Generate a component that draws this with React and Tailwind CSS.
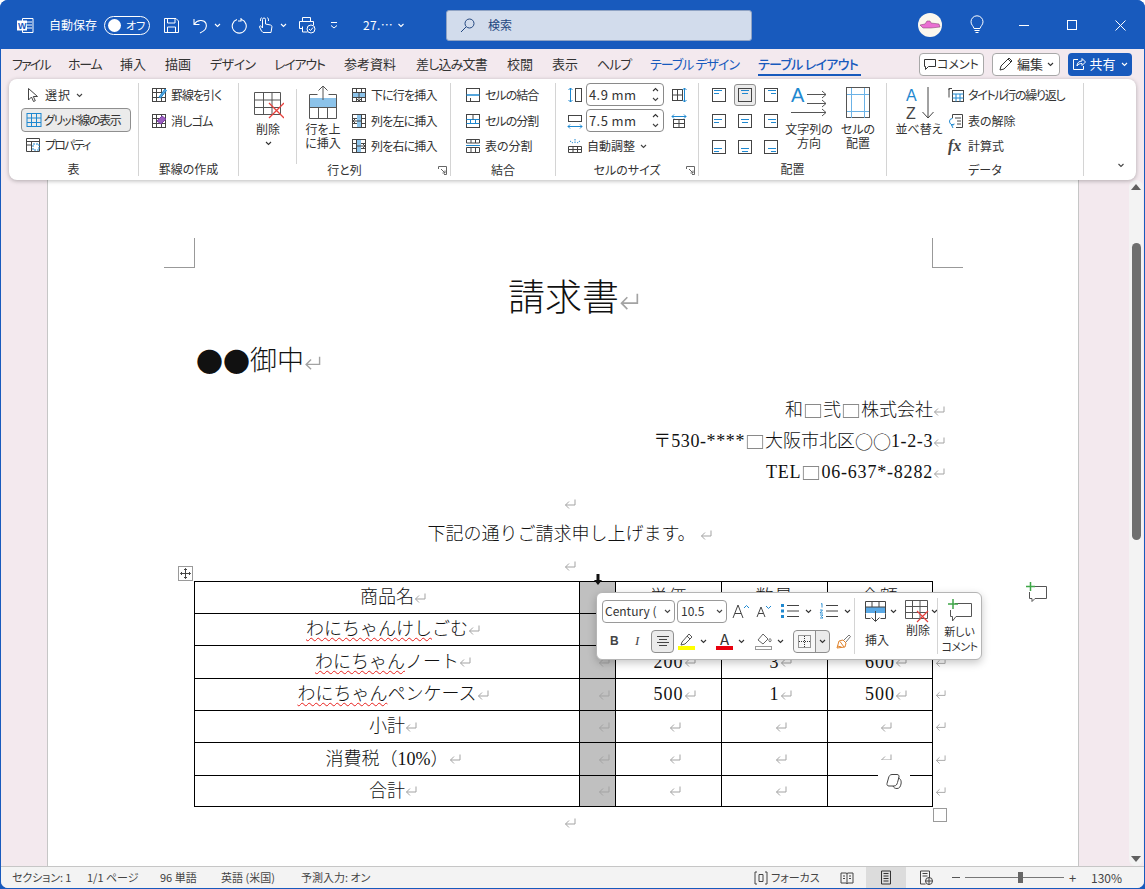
const UI = { fontFamily: '"Noto Sans CJK JP", sans-serif' }
const CJK = { fontFamily: '"Noto Sans CJK JP", sans-serif' }

function S({ w = 16, h = 16, className = '', children }) {
  return (
    <svg width={w} height={h} viewBox={`0 0 ${w} ${h}`} fill="none" stroke="currentColor" className={`shrink-0 ${className}`}>
      {children}
    </svg>
  )
}

function Chev({ className = 'text-[#444]', w = 7 }) {
  return (
    <svg width={w} height="5" viewBox="0 0 7 5" fill="none" stroke="currentColor" strokeWidth="1.1" className={`shrink-0 ${className}`}>
      <path d="M1 1l2.5 2.5L6 1" />
    </svg>
  )
}

function Ret({ w = 12, h = 10, className = '' }) {
  return (
    <svg width={w} height={h} viewBox="0 0 12 10" fill="none" stroke="#a3a3a3" strokeWidth="1" preserveAspectRatio="none" className={`inline-block shrink-0 ${className}`}>
      <path d="M11 0.5v5.5H1.5M5 2.5L1.5 6L5 9.5" />
    </svg>
  )
}

// cell grid used by most table icons
function Tbl({ cols = [5, 10], rows = [5, 10], children }) {
  return (
    <S className="text-[#444]">
      <rect x="1.5" y="1.5" width="13" height="13" />
      {cols.map(c => <path key={c} d={`M${c + 0.5} 1.5v13`} />)}
      {rows.map(r => <path key={r} d={`M1.5 ${r + 0.5}h13`} />)}
      {children}
    </S>
  )
}

function Small({ icon, label, chevron, className = '', t = '' }) {
  return (
    <div className={`flex items-center h-[26px] text-[12px] text-[#333] ${className}`}>
      {icon}
      <span className={`ml-[4px] whitespace-nowrap ${t}`}>{label}</span>
      {chevron && <Chev className="ml-[5px] text-[#444]" />}
    </div>
  )
}

function Launcher() {
  return (
    <S w={9} h={9} className="text-[#666]">
      <path d="M0.5 3V0.5H8.5V8.5H6M3 3l4 4M7 4.5V7H4.5" />
    </S>
  )
}

function Group({ w, label, launcher, children }) {
  return (
    <div className={`relative flex flex-col my-[4px] border-r border-[#d4d4d4] ${w}`}>
      <div className="flex h-[76px]">{children}</div>
      <div className="h-[14px] mt-[4px] flex items-center justify-center text-[12px] text-[#333]">{label}</div>
      {launcher && <div className="absolute right-[3px] bottom-[1px]"><Launcher /></div>}
    </div>
  )
}

function Big({ icon, lines, chevron, className = '' }) {
  return (
    <div className={`flex flex-col items-center text-[12px] leading-[14px] text-[#333] ${className}`}>
      {icon}
      {lines.map(l => <span key={l} className="whitespace-nowrap">{l}</span>)}
      {chevron && <Chev className="mt-[5px]" />}
    </div>
  )
}

function AlignIcon({ y, x, active }) {
  return (
    <div className={`flex items-center justify-center w-[22px] h-[22px] rounded-[3px] ${active ? 'bg-[#ebebeb] border border-[#8f8f8f]' : ''}`}>
      <S className="text-[#444]">
        <rect x="1.5" y="1.5" width="13" height="13" />
        <path d={`M${x === 0 ? 3 : x === 1 ? 4 : 5} ${y + 0.5}h8`} stroke="#1e88d0" />
        <path d={`M${x === 0 ? 3 : x === 1 ? 5 : 8} ${y + 3.5}h${x === 1 ? 6 : 5}`} stroke="#1e88d0" />
      </S>
    </div>
  )
}

function Spinner({ value }) {
  return (
    <div className="flex items-center justify-between w-[78px] h-[23px] border border-[#8a8a8a] rounded-[4px] pl-[2px] pr-[4px] text-[13px] text-[#333] bg-white">
      <span className="tracking-[0.4px]">{value}</span>
      <div className="flex flex-col gap-[5px]">
        <Chev className="rotate-180" />
        <Chev />
      </div>
    </div>
  )
}

function TitleBar() {
  return (
    <div className="flex items-center h-[49px] bg-[#185abd] text-white shrink-0 pt-[1px]">
      {/* word logo */}
      <svg width="17" height="17" viewBox="0 0 17 17" className="ml-[17px] shrink-0">
        <path d="M5.5 1.5H16v14H5.5z" fill="none" stroke="#fff" />
        <path d="M10 5h5M10 8h5M10 11h5" stroke="#fff" />
        <rect x="0" y="3.5" width="10" height="10" fill="#fff" />
        <text x="1" y="12" fontSize="9" fontWeight="700" fill="#185abd" fontFamily="Liberation Sans">W</text>
      </svg>
      <span className="ml-[15px] text-[12px] w-[48px] whitespace-nowrap">自動保存</span>
      <div className="ml-[7px] flex items-center w-[46px] h-[19px] border border-white rounded-full pl-[3px]">
        <span className="w-[13px] h-[13px] rounded-full bg-white" />
        <span className="ml-[5px] text-[11px]">オフ</span>
      </div>
      <S className="ml-[13px]" w={17} h={17}>
        <path d="M1.5 1.5h11.5l2.5 2.5v11.5H1.5zM4.5 1.5v4.5h7.5V1.5M4.5 15.5v-5.5h8v5.5" />
      </S>
      <S className="ml-[12px]" w={17} h={17} >
        <path d="M2 2v5.5h5.5M2.5 7C5 3 12 2 14 6.5c1.5 4-1.5 7.5-6 9.5" strokeWidth="1.1" />
      </S>
      <Chev className="ml-[5px] text-white" />
      <S className="ml-[9px]" w={17} h={17}>
        <path d="M7 2.5A7 7 0 1 0 11.5 2.5M11 1v3h-3" strokeWidth="1.1" />
      </S>
      <S className="ml-[11px]" w={16} h={18}>
        <path d="M3.5 15l-2-4c-.4-1 1-1.6 1.6-.7L4.5 12V3.5a1.5 1.5 0 0 1 3 0V8l5 1c1 .2 1.5 1 1.4 2L13 16.5H5zM2.5 5a4 4 0 0 1 1-3.5M9.5 1.5a4 4 0 0 1 1 3.5" />
      </S>
      <Chev className="ml-[6px] text-white" />
      <S className="ml-[11px]" w={18} h={18}>
        <path d="M4.5 5V1.5h8V5M4.5 12.5H1.5V5.5h14V9M4.5 10.5v5.5h5" />
        <circle cx="13" cy="13" r="4" fill="#185abd" />
        <path d="M11 13l1.5 1.5L15 11.5" />
      </S>
      <svg width="8" height="8" viewBox="0 0 8 8" fill="none" stroke="#fff" className="ml-[14px] shrink-0">
        <path d="M1 1.5h6M1 4.5l3 2.5 3-2.5" />
      </svg>
      <span className="ml-[25px] text-[12px] w-[30px] tracking-[0.4px]">27.…</span>
      <Chev className="ml-[3px] text-white" w={10} />
      <div className="ml-[40px] flex items-center w-[306px] h-[31px] bg-[#d2dcec] border border-[#8fa3c4] rounded-[3px] text-[#23477f]">
        <S className="ml-[13px]">
          <circle cx="9.5" cy="6.5" r="4.5" />
          <path d="M6 10l-5 5" />
        </S>
        <span className="ml-[12px] text-[12px]">検索</span>
      </div>
      <div className="ml-[166px] w-[24px] h-[24px] rounded-full bg-[#fbf7ee] flex items-center justify-center shrink-0">
        <svg width="22" height="10" viewBox="0 0 22 10">
          <path d="M1 5l5-1 2-3h3l1 2 8 1 1 3-9 1H4z" fill="#ea6fd2" stroke="#7a3a6a" strokeWidth="0.5" />
        </svg>
      </div>
      <S className="ml-[27px]" w={16} h={20}>
        <path d="M5 13.5C4.5 11 2 10 2 6.8a6 6 0 0 1 12 0C14 10 11.5 11 11 13.5zM5.5 15.5h5M6.5 17.5h3" />
      </S>
      <div className="ml-[34px] w-[10px] h-px bg-white" />
      <div className="ml-[38px] w-[10px] h-[10px] border border-white" />
      <S className="ml-[38px]" w={11} h={11}>
        <path d="M0.5 0.5l10 10M10.5 0.5l-10 10" />
      </S>
    </div>
  )
}

const TABS = [
  ['ファイル', 'w-[38px] ml-[11px] tracking-[-1.8px]'], ['ホーム', 'w-[33px] ml-[18px] tracking-[-1.3px]'], ['挿入', 'w-[26px] ml-[19px]'], ['描画', 'w-[26px] ml-[19px]'],
  ['デザイン', 'w-[43px] ml-[19px] tracking-[-0.5px]'], ['レイアウト', 'w-[49px] ml-[21px] tracking-[-1.2px]'], ['参考資料', 'w-[52px] ml-[21px]'], ['差し込み文書', 'w-[72px] ml-[20px] tracking-[-0.8px]'],
  ['校閲', 'w-[26px] ml-[19px]'], ['表示', 'w-[26px] ml-[19px]'], ['ヘルプ', 'w-[33px] ml-[19px] tracking-[-1px]'],
]

function TabRow() {
  return (
    <div className="flex items-center h-[30px] shrink-0 text-[13px] text-[#333]">
      {TABS.map(([t, c]) => <span key={t} className={`whitespace-nowrap ${c}`}>{t}</span>)}
      <span className="ml-[20px] w-[89px] whitespace-nowrap text-[#185abd] tracking-[-1px]">テーブル デザイン</span>
      <span className="ml-[19px] w-[103px] whitespace-nowrap text-[#185abd] font-medium border-b-2 border-[#185abd] h-[21px] mt-[3px] tracking-[-0.7px] leading-[18px]">テーブル レイアウト</span>
      <div className="ml-[58px] flex items-center justify-center w-[65px] h-[23px] bg-white border border-[#a8a8a8] rounded-[4px] text-[12px]">
        <S w={12} h={12} className="text-[#333]"><path d="M0.5 1.5h11v7h-7l-3 3v-3h-1z" /></S>
        <span className="ml-[1px]">コメント</span>
      </div>
      <div className="ml-[8px] flex items-center justify-center w-[68px] h-[23px] bg-white border border-[#a8a8a8] rounded-[4px] text-[13px]">
        <S className="text-[#333]"><path d="M2 14l1-4 8-8 3 3-8 8zM10 3l3 3" /></S>
        <span className="ml-[3px]">編集</span>
        <Chev className="ml-[4px]" />
      </div>
      <div className="ml-[8px] flex items-center justify-center w-[64px] h-[23px] bg-[#185abd] rounded-[4px] text-white text-[13px]">
        <S w={14} h={14}><path d="M6 2.5H1.5v10h10V9M5 9c0-3 2-5 5-5V1.5L13.5 5 10 8.5V6.5C8 6.5 6 7 5 9z" /></S>
        <span className="ml-[3px]">共有</span>
        <Chev className="ml-[5px] text-white" />
      </div>
    </div>
  )
}

function Ribbon() {
  const blueRow = (y, h) => <rect x="2" y={y} width="12" height={h} fill="#8cc3ea" stroke="none" />
  return (
    <div className="relative z-10 flex mx-[8px] h-[101px] bg-white rounded-[8px] shadow-[0_1px_4px_rgba(0,0,0,0.28)] shrink-0">
      <Group w="w-[130px]" label="表">
        <div className="flex flex-col pl-[12px] -mt-[1px]">
          <Small className="pl-[5px]" t="tracking-[1px]" label="選択" chevron icon={
            <S w={13} className="text-[#444] mr-[2px]"><path d="M2.5 1.5v11.5l3-3 2 4.5 1.8-.8-2-4.2h4.2z" /></S>
          } />
          <div className="flex items-center w-[110px] h-[24px] bg-[#ebebeb] border border-[#8f8f8f] rounded-[4px] pl-[4px] text-[12px] text-[#333] whitespace-nowrap">
            <S className="text-[#1e88d0]"><rect x="1" y="1.5" width="14" height="13" /><path d="M5.5 1.5v13M10.5 1.5v13M1 6h14M1 10.5h14" /></S>
            <span className="ml-[2px] tracking-[-1.35px]">グリッド線の表示</span>
          </div>
          <Small className="pl-[4px]" t="tracking-[-1.8px]" label="プロパティ" icon={
            <S className="text-[#444]"><path d="M1.5 1.5h13v13h-13zM1.5 4.5h13M1.5 8h5M6.5 4.5v10" /><rect x="8" y="7" width="6" height="6" stroke="#1e88d0" strokeDasharray="2 1" /></S>
          } />
        </div>
      </Group>
      <Group w="w-[100px]" label="罫線の作成">
        <div className="flex flex-col pl-[12px] -mt-[1px]">
          <Small t="tracking-[-1px]" label="罫線を引く" icon={<Tbl><path d="M8 10l6-8 1.5 1.5L9.5 11z" fill="#5aa9e0" stroke="#1e88d0" /></Tbl>} />
          <Small t="tracking-[-0.75px]" label="消しゴム" icon={<Tbl><path d="M6 8l5-5 4 3-5 5z" fill="#9a5fc0" stroke="#7e3fa6" /></Tbl>} />
        </div>
      </Group>
      <Group w="w-[212px]" label="行と列" launcher>
        <Big className="ml-[12px] w-[34px] pt-[7px]" lines={['削除']} chevron icon={
          <svg width="32" height="30" viewBox="0 0 32 30" fill="none" stroke="#555" className="mb-[2px]">
            <path d="M2.5 2.5h26v22h-26zM11.5 2.5v22M20 2.5v22M2.5 10h26M2.5 17.5h26" />
            <path d="M17 13l15 15M32 13L17 28" stroke="#e8413c" strokeWidth="1.3" />
          </svg>
        } />
        <div className="ml-[11px] mt-[6px] h-[75px] border-l border-[#d4d4d4]" />
        <Big className="ml-[9px] w-[34px] pt-[1px]" lines={['行を上', 'に挿入']} icon={
          <svg width="32" height="38" viewBox="0 0 32 38" fill="none" stroke="#555">
            <rect x="2" y="14" width="28" height="9" fill="#8cc3ea" stroke="none" />
            <path d="M2.5 10.5V34.5h27V10.5h-8M10.5 10.5h-8M2.5 23.5h27M11.5 23.5v11M20.5 23.5v11M16 16V2M11.5 6.5L16 2l4.5 4.5" />
          </svg>
        } />
        <div className="flex flex-col ml-[11px] -mt-[1px]">
          <Small t="tracking-[-0.85px]" label="下に行を挿入" icon={<Tbl cols={[5, 10]} rows={[]}>{blueRow(5, 5)}<path d="M1.5 5.5h13M1.5 10.5h13M8 6v8M5.5 11.5L8 14l2.5-2.5" /></Tbl>} />
          <Small t="tracking-[-0.85px]" label="列を左に挿入" icon={<Tbl cols={[]} rows={[5, 10]}><rect x="6" y="2" width="4" height="12" fill="#8cc3ea" stroke="none" /><path d="M10.5 1.5v13M2 8h8M4.5 5.5L2 8l2.5 2.5" /></Tbl>} />
          <Small t="tracking-[-0.85px]" label="列を右に挿入" icon={<Tbl cols={[]} rows={[5, 10]}><rect x="6" y="2" width="4" height="12" fill="#8cc3ea" stroke="none" /><path d="M5.5 1.5v13M6 8h8M11.5 5.5L14 8l-2.5 2.5" /></Tbl>} />
        </div>
      </Group>
      <Group w="w-[105px]" label="結合">
        <div className="flex flex-col pl-[14px] -mt-[1px]">
          <Small t="tracking-[-1px]" label="セルの結合" icon={<S className="text-[#444]"><rect x="1.5" y="1.5" width="13" height="13" /><path d="M1.5 8h13" stroke="#1e88d0" strokeWidth="1.4" /><path d="M5.5 11v3" /></S>} />
          <Small t="tracking-[-1px]" label="セルの分割" icon={<S className="text-[#444]"><rect x="1.5" y="1.5" width="13" height="13" /><path d="M1.5 6.5h13M1.5 10.5h13M5.5 6.5v4M10.5 6.5v4" stroke="#1e88d0" /><path d="M8 1.5v5" /></S>} />
          <Small label="表の分割" icon={<S className="text-[#444]"><path d="M1.5 1.5h13v3.5h-13zM1.5 9.5h13v5h-13zM6 9.5v5M10.5 9.5v5M6 1.5v3.5M10.5 1.5v3.5" /><path d="M1 7.5h14" stroke="#1e88d0" /></S>} />
        </div>
      </Group>
      <Group w="w-[143px]" label="セルのサイズ" launcher>
        <div className="flex flex-col pl-[11px] -mt-[1px]">
          <div className="flex items-center h-[26px]">
            <S className="text-[#1e88d0]"><path d="M3.5 1v14M1.5 3l2-2 2 2M1.5 13l2 2 2-2" /><rect x="8.5" y="1.5" width="6" height="13" stroke="#444" /></S>
            <span className="ml-[3px]"><Spinner value="4.9 mm" /></span>
            <S className="ml-[7px] text-[#444]"><rect x="1.5" y="2.5" width="10" height="11" /><path d="M6.5 2.5v11M1.5 8h10" /><path d="M13.5 1v14M11.5 3l2-2 2 2M11.5 13l2 2 2-2" stroke="#1e88d0" /></S>
          </div>
          <div className="flex items-center h-[26px]">
            <S className="text-[#1e88d0]"><path d="M1 13.5h14M3 11.5l-2 2 2 2M13 11.5l2 2-2 2" /><rect x="1.5" y="2.5" width="13" height="6" stroke="#444" /></S>
            <span className="ml-[3px]"><Spinner value="7.5 mm" /></span>
            <S className="ml-[7px] text-[#444]"><rect x="2.5" y="6.5" width="11" height="8" /><path d="M8 6.5v8M2.5 10.5h11" /><path d="M1 3.5h14M3 1.5l-2 2 2 2M13 1.5l2 2-2 2" stroke="#1e88d0" /></S>
          </div>
          <Small label="自動調整" chevron icon={<S className="text-[#444]"><path d="M1.5 8.5h13v6h-13zM6 8.5v6M10.5 8.5v6M1.5 11.5h13" /><path d="M8 1v5M3 3l3 2M13 3l-3 2" stroke="#1e88d0" strokeDasharray="1.5 1" /></S>} />
        </div>
      </Group>
      <Group w="w-[188px]" label="配置">
        <div className="grid grid-cols-3 gap-x-[4px] gap-y-[4px] ml-[9px] h-[74px] pt-[1px]">
          {[0, 1, 2].flatMap(r => [0, 1, 2].map(c => (
            <AlignIcon key={`${r}${c}`} y={[3, 6, 9][r]} x={c} active={r === 0 && c === 1} />
          )))}
        </div>
        <Big className="w-[54px] pt-[1px]" lines={['文字列の', '方向']} icon={
          <svg width="38" height="37" viewBox="0 0 38 37" fill="none" stroke="#555" className="mb-[1px]">
            <text x="1" y="18" fontSize="20" fill="#1e88d0" stroke="none" fontFamily="Liberation Sans">A</text>
            <path d="M17 10.5h19M32 7l4 3.5-4 3.5M17 19.5h19M32 16l4 3.5-4 3.5M1 28.5h35M32 25l4 3.5-4 3.5M1 20h0" />
          </svg>
        } />
        <Big className="ml-[2px] w-[40px] pt-[4px]" lines={['セルの', '配置']} icon={
          <svg width="24" height="32" viewBox="0 0 24 32" fill="none" stroke="#555" className="mb-[3px]">
            <rect x="0.5" y="0.5" width="23" height="30" />
            <path d="M5.5 1v30M18.5 1v30M1 7.5h22M1 24.5h22" stroke="#6bb2e6" />
          </svg>
        } />
      </Group>
      <Group w="w-[197px]" label="データ">
        <Big className="ml-[10px] w-[44px] pt-[3px]" lines={['並べ替え']} icon={
          <svg width="36" height="36" viewBox="0 0 36 36" fill="none" stroke="#444">
            <text x="5" y="15" fontSize="16" fill="#1e88d0" stroke="none" fontFamily="Liberation Sans">A</text>
            <text x="5" y="33" fontSize="16" fill="#444" stroke="none" fontFamily="Liberation Sans">Z</text>
            <path d="M27 1v31M21.500 26l5.500 6 5.500-6" />
          </svg>
        } />
        <div className="flex flex-col ml-[7px] -mt-[1px]">
          <Small t="tracking-[-1.3px]" label="タイトル行の繰り返し" icon={<S className="text-[#444]"><path d="M1 3v-1.500h3M1 1.500v9" /><rect x="4.500" y="3.500" width="11" height="11" /><path d="M4.500 7h11M8 7v7.500M12 7v7.500M4.500 11h11" stroke="#1e88d0" /></S>} />
          <Small label="表の解除" icon={<S className="text-[#444]"><path d="M4.500 5V1.500h10v13H8M7 5h6M9 8h4M9 11h4" /><path d="M1.500 8a3 3 0 0 1 3-2.500M1.500 8c0 3 2 4 4 4M5 15l-1.500-3 3-1" stroke="#1e88d0" /></S>} />
          <Small label="計算式" icon={<span style={{ fontFamily: '"Liberation Serif", serif' }} className="w-[16px] text-[16px] italic font-bold text-[#444] leading-none">fx</span>} />
        </div>
      </Group>
      <div className="flex-1 flex items-end justify-end pb-[12px] pr-[10px]"><Chev className="text-[#444]" w={10} /></div>
    </div>
  )
}

function Blank() {
  return <span className="inline-block w-[18px] h-[14px] mx-[1px] border border-[#8a8a8a] align-[-1px] box-border scale-x-90" />
}

function Para({ className = '', children, center }) {
  return (
    <div className={`flex items-center h-[31px] whitespace-nowrap ${center ? 'justify-center' : 'justify-end'} ${className}`}>
      {children}
    </div>
  )
}

const COLS = 'grid grid-cols-[385px_36px_106px_106px_106px_13px]'
const ROWS = [
  { h: 'h-[32px]', name: '商品名', vals: ['単価', '数量', '金額'], mark: false },
  { h: 'h-[32px]', name: 'わにちゃんけしごむ', wavy: 7, vals: ['100', '5', '500'] },
  { h: 'h-[33px]', name: 'わにちゃんノート', wavy: 5, vals: ['200', '3', '600'] },
  { h: 'h-[32px]', name: 'わにちゃんペンケース', wavy: 5, vals: ['500', '1', '500'] },
  { h: 'h-[32px]', name: '小計', vals: ['', '', ''] },
  { h: 'h-[33px]', name: '消費税（10%）', vals: ['', '', ''] },
  { h: 'h-[32px]', name: '合計', vals: ['', '', ''] },
]

function Cell({ className = '', children }) {
  return (
    <div className={`flex items-center justify-center border-l border-t border-black ${className}`}>
      {children}
      <Ret className="mr-[-12px]" />
    </div>
  )
}

function InvoiceTable() {
  return (
    <div className="text-[18px]">
      {ROWS.map((r, i) => (
        <div key={r.name} className={`${COLS} ${r.h}`}>
          <Cell className={i === ROWS.length - 1 ? 'border-b' : ''}>
            {r.wavy ? (
              <span>
                <span className="underline decoration-wavy decoration-[#e8201c] decoration-1 underline-offset-[2px]">{r.name.slice(0, r.wavy)}</span>
                {r.name.slice(r.wavy)}
              </span>
            ) : r.name}
          </Cell>
          <Cell className={`bg-[#c0c0c0] ${i === ROWS.length - 1 ? 'border-b' : ''}`} />
          {r.vals.map((v, j) => (
            <Cell key={j} className={`${i === ROWS.length - 1 ? 'border-b' : ''} ${j === 2 ? 'border-r' : ''}`}>
              <span className="tracking-[1px]">{v}</span>
            </Cell>
          ))}
          <div className="flex items-center pl-[2px] pt-[1px]"><Ret w={11} h={9} /></div>
        </div>
      ))}
    </div>
  )
}

function FloatToolbar() {
  return (
    <div style={UI} className="[font-feature-settings:'palt'] font-normal absolute left-[548px] top-[412px] z-20 flex w-[386px] h-[68px] bg-white border border-[#b5b5b5] rounded-[6px] shadow-[0_3px_8px_rgba(0,0,0,0.22)] text-[#333] text-[12px]">
      <div className="flex flex-col w-[257px] pl-[5px] pt-[6px]">
        <div className="flex items-center h-[24px]">
          <div className="flex items-center justify-between w-[73px] h-[23px] border border-[#9a9a9a] rounded-[4px] pl-[2px] pr-[3px] text-[12px] whitespace-nowrap">Century (<Chev /></div>
          <div className="flex items-center justify-between w-[50px] h-[23px] ml-[2px] border border-[#9a9a9a] rounded-[4px] pl-[3px] pr-[3px] text-[12px]">10.5<Chev /></div>
          <S w={17} h={18} className="ml-[5px] text-[#444]"><path d="M1 16L6 3l5 13M3 11.500h6" /><path d="M12 6l2.500-2.500L17 6" stroke="#1e88d0" /></S>
          <S w={16} h={16} className="ml-[7px] text-[#444]"><path d="M1 14l4-10 4 10M2.500 10.500h5" /><path d="M10 3l2.500 2.500L15 3" stroke="#1e88d0" /></S>
          <S w={20} h={16} className="ml-[8px] text-[#444]"><path d="M7 2.500h12M7 8h12M7 13.500h12" /><rect x="1" y="1" width="3" height="3" fill="#1e88d0" stroke="none" /><rect x="1" y="6.500" width="3" height="3" fill="#1e88d0" stroke="none" /><rect x="1" y="12" width="3" height="3" fill="#1e88d0" stroke="none" /></S>
          <Chev className="ml-[5px]" />
          <S w={20} h={16} className="ml-[7px] text-[#444]"><path d="M7 2.500h12M7 8h12M7 13.500h12" /><path d="M2 1l1-.5v4M1 7h2.500l-2.500 3h3M1 12h3l-1.500 1.500 1.500 1.500H1" stroke="#1e88d0" strokeWidth="0.9" /></S>
          <Chev className="ml-[5px]" />
        </div>
        <div className="flex items-center h-[24px] mt-[6px]">
          <span style={{ fontFamily: '"Liberation Sans", sans-serif' }} className="ml-[8px] w-[10px] font-bold text-[12px] text-[#444]">B</span>
          <span style={{ fontFamily: '"Liberation Serif", serif' }} className="ml-[15px] w-[8px] italic text-[13px] text-[#444]">I</span>
          <div className="ml-[8px] flex items-center justify-center w-[23px] h-[23px] bg-[#ebebeb] border border-[#8f8f8f] rounded-[4px]">
            <S w={14} h={14} className="text-[#444]"><path d="M1 2.500h12M3 5.500h8M1 8.500h12M3 11.500h8" /></S>
          </div>
          <div className="ml-[4px] flex flex-col items-center w-[17px]">
            <S w={15} h={14} className="text-[#555]"><path d="M2 13l1-3 7-8 3 3-7 7zM8 4l3 3" /></S>
            <span className="w-[17px] h-[4px] bg-[#ffff00]" />
          </div>
          <Chev className="ml-[5px]" />
          <div className="ml-[9px] flex flex-col items-center w-[17px] leading-none">
            <span className="h-[14px] text-[15px] leading-[14px]">A</span>
            <span className="w-[17px] h-[4px] bg-[#e8000e]" />
          </div>
          <Chev className="ml-[5px]" />
          <div className="ml-[10px] flex flex-col items-center w-[17px]">
            <S w={16} h={14} className="text-[#666]"><path d="M2 8l5-6 5 5-5 5zM14 10c-1.500-1-1.500-2-0-3.500 1.500 1.500 1.500 2.500 0 3.500z" /></S>
            <span className="w-[17px] h-[4px] border border-[#999]" />
          </div>
          <Chev className="ml-[5px]" />
          <div className="ml-[9px] flex items-center w-[37px] h-[23px] bg-[#ebebeb] border border-[#8f8f8f] rounded-[4px]">
            <div className="flex items-center justify-center w-[22px] h-full bg-white/60 rounded-l-[4px] border-r border-[#8f8f8f]">
              <S w={15} h={15} className="text-[#333]"><rect x="1.500" y="1.500" width="12" height="12" strokeDasharray="1 1" /><path d="M7.500 2v11M2 7.500h11" strokeDasharray="1 1" /></S>
            </div>
            <Chev className="ml-[3px]" />
          </div>
          <S w={17} h={17} className="ml-[5px] text-[#e0832c]"><path d="M2 15l2-7 4-1 3 3-1 4zM5 8.500l4 5.500M2.500 13l4 1" /><path d="M9 7l5-5 1.500 1.500L11 9" stroke="#777" /></S>
        </div>
      </div>
      <div className="my-[5px] border-l border-[#d4d4d4]" />
      <div className="flex flex-col w-[82px] pl-[9px] pt-[6px]">
        <div className="flex items-center h-[24px]">
          <S w={23} h={23} className="text-[#444]"><rect x="1" y="7" width="21" height="6" fill="#5aa9e6" stroke="none" /><path d="M1.500 13.500V1.500h20V13.500M1.500 7h20M8 1.500V7M15 1.500V7M11.500 11v10M7.500 17.500l4 4 4-4M1.500 13.500v5h5M21.500 13.500v5h-5" /></S>
          <Chev className="ml-[3px]" />
          <S w={26} h={24} className="ml-[7px] text-[#555]"><path d="M1.500 1.500h22v18h-22zM8.500 1.500v18M16 1.500v18M1.500 7.500h22M1.500 13.500h22" /><path d="M13 12l11 11M24 12L13 23" stroke="#e8413c" strokeWidth="1.200" /></S>
          <Chev className="ml-[1px]" />
        </div>
        <div className="flex mt-[1px] leading-[14px]">
          <span className="ml-[1px] mt-[9px]">挿入</span>
          <span className="ml-[17px] -mt-[1px]">削除</span>
        </div>
      </div>
      <div className="my-[5px] border-l border-[#d4d4d4]" />
      <div className="flex flex-col items-center flex-1 pt-[6px] text-[11px] leading-[15px] whitespace-nowrap">
        <svg width="26" height="24" viewBox="0 0 26 24" fill="none" stroke="#555" className="mb-[1px]">
          <path d="M8 4.500h16.500v13H9L5.500 22v-4.500h-2V11" />
          <path d="M6 0v10M1 5h10" stroke="#3fa648" strokeWidth="1.500" />
        </svg>
        <span>新しい</span>
        <span className="tracking-[-0.6px]">コメント</span>
      </div>
    </div>
  )
}

function Page() {
  const doc = { fontFamily: '"Liberation Serif", "Noto Sans CJK JP", serif' }
  return (
    <div style={doc} className="relative w-[1032px] h-full bg-white border-x border-[#c6c6c6] text-[#111] font-light overflow-hidden ml-[46px] shrink-0">
      <div className="flex justify-between w-[799px] ml-[116px] pt-[58px]">
        <div className="w-[31px] h-[30px] border-r border-b border-[#999]" />
        <div className="w-[31px] h-[30px] border-l border-b border-[#999]" />
      </div>
      <div className="ml-[146px] w-[752px] pr-[13px]">
        <div className="flex items-center justify-center h-[62px] text-[37px]">請求書<Ret w={20} h={17} className="mr-[-20px] mt-[4px]" /></div>
        <div className="flex items-center h-[62px] text-[27px] pl-[2px]"><span style={CJK}>●●</span>御中<Ret w={17} h={14} className="mt-[4px]" /></div>
        <div className="h-[3px]" />
        <div className="text-[18px]">
          <Para>和<Blank />弐<Blank />株式会社<Ret className="mr-[-12px]" /></Para>
          <Para>〒<span className="tracking-[0.6px]">530-****</span><Blank />大阪市北区<span style={CJK}>○○</span><span className="tracking-[0.6px]">1-2-3</span><Ret className="mr-[-12px]" /></Para>
          <Para><span className="tracking-[0.8px]">TEL</span><Blank /><span className="tracking-[0.8px]">06-637*-8282</span><Ret className="mr-[-12px]" /></Para>
          <Para center><Ret className="mr-[-12px]" /></Para>
          <Para center>下記の通りご請求申し上げます。<Ret className="mr-[-12px] ml-[4px]" /></Para>
          <Para center><Ret className="mr-[-12px]" /></Para>
        </div>
        <div className="-mr-[13px]"><InvoiceTable /></div>
        <Para center><Ret className="mr-[-12px]" /></Para>
      </div>
      {/* table handles and floating bits that sit over the document */}
      <div className="absolute left-[130px] top-[386px] flex items-center justify-center w-[15px] h-[15px] border border-[#9a9a9a] bg-white">
        <S w={11} h={11} className="text-[#444]"><path d="M5.500 0.500v10M0.500 5.500h10M4 2l1.500-1.500L7 2M4 9l1.500 1.500L7 9M2 4L0.500 5.500 2 7M9 4l1.500 1.500L9 7" /></S>
      </div>
      <svg width="8" height="11" viewBox="0 0 8 11" className="absolute left-[546px] top-[394px]"><path d="M2.500 0h3v6H8L4 11 0 6h2.500z" fill="#111" /></svg>
      <FloatToolbar />
      <S w={21} h={20} className="absolute left-[978px] top-[402px] text-[#555]">
        <path d="M5 4.500h15.500v12H9l-3 3v-3H3.500V10" />
        <path d="M4.500 0v9M0 4.500h9" stroke="#3fa648" strokeWidth="1.500" />
      </S>
      <div className="absolute left-[830px] top-[580px] flex items-center justify-center w-[32px] h-[42px] bg-white">
        <S w={17} h={17} className="text-[#444]"><path d="M6 1.500c-2 0-3 1.500-3.500 3.500L1 10.500c-.3 1.500.5 2.500 2 2.500h5c2 0 3-1.500 3.500-3.500L13 4c.3-1.500-.5-2.500-2-2.500zM7 13c1 2 2 2.500 4 2.500 2.500 0 3.500-2 4-4.500s0-5.500-3-6" /></S>
      </div>
      <div className="absolute left-[885px] top-[628px] w-[14px] h-[14px] border border-[#9a9a9a] bg-white" />
    </div>
  )
}

function Scrollbar() {
  return (
    <div className="flex flex-col items-center w-[14px] h-full bg-[#f3f3f3] rounded-t-[7px] rounded-b-[7px] ml-[50px] pt-[4px] pb-[4px]">
      <span className="w-0 h-0 border-x-[5px] border-x-transparent border-b-[6px] border-b-[#606060]" />
      <div className="w-[9px] h-[297px] mt-[53px] bg-[#6e6e6e] rounded-full" />
      <span className="mt-auto w-0 h-0 border-x-[5px] border-x-transparent border-t-[6px] border-t-[#606060]" />
    </div>
  )
}

function StatusBar() {
  return (
    <div className="flex items-center h-[22px] shrink-0 bg-[#f3f3f3] border-t border-[#c6c6c6] text-[11px] text-[#444] whitespace-nowrap">
      <span className="ml-[11px] w-[59px] tracking-[-0.1px]">セクション: 1</span>
      <span className="ml-[16px] w-[53px]">1/1 ページ</span>
      <span className="ml-[20px] w-[42px]">96 単語</span>
      <span className="ml-[19px] w-[62px]">英語 (米国)</span>
      <span className="ml-[18px] w-[76px]">予測入力: オン</span>
      <S w={14} h={14} className="ml-[377px] text-[#444]"><path d="M3 1H1v12h2M11 1h2v12h-2M5 3.500h4v7H5z" /></S>
      <span className="ml-[3px] w-[44px]">フォーカス</span>
      <S w={14} h={14} className="ml-[25px] text-[#444]"><path d="M1 2h5.500l.5 1 .5-1H13v10H7.500l-.5 1-.5-1H1zM7 3v9M3 5h2M3 7.500h2M9 5h2M9 7.500h2" /></S>
      <div className="ml-[12px] flex items-center justify-center w-[40px] h-full bg-[#dcdcdc]">
        <S w={12} h={15} className="text-[#333]"><path d="M1.500 1h9v13h-9zM3.500 3.500h5M3.500 6h5M3.500 8.500h5M3.500 11h5" /></S>
      </div>
      <S w={14} h={15} className="ml-[13px] text-[#444]"><path d="M1.500 1h9v7M1.500 1v13h5M3.500 3.500h5M3.500 6h5" /><circle cx="10" cy="11" r="3.500" /><path d="M6.500 11h7M10 7.500v7" /></S>
      <div className="ml-[19px] w-[8px] h-px bg-[#555]" />
      <div className="relative ml-[5px] w-[99px] h-px bg-[#777]">
        <span className="absolute left-[53px] -top-[5px] w-[5px] h-[11px] bg-[#666]" />
      </div>
      <span className="ml-[5px] w-[8px] text-[13px] leading-none text-[#444]">+</span>
      <span className="ml-[14px] text-[12px]">130%</span>
    </div>
  )
}

export default function App() {
  return (
    <div style={UI} className="[font-feature-settings:'palt'] flex flex-col w-[1145px] h-[889px] overflow-hidden bg-[#185abd] rounded-t-[8px]">
      <TitleBar />
      <div className="flex flex-col flex-1 min-h-0 mx-px mb-px bg-[#f3e9ee] rounded-b-[7px] overflow-hidden">
        <TabRow />
        <Ribbon />
        <div className="flex flex-1 min-h-0 [font-feature-settings:normal]">
          <Page />
          <Scrollbar />
        </div>
        <StatusBar />
      </div>
    </div>
  )
}
